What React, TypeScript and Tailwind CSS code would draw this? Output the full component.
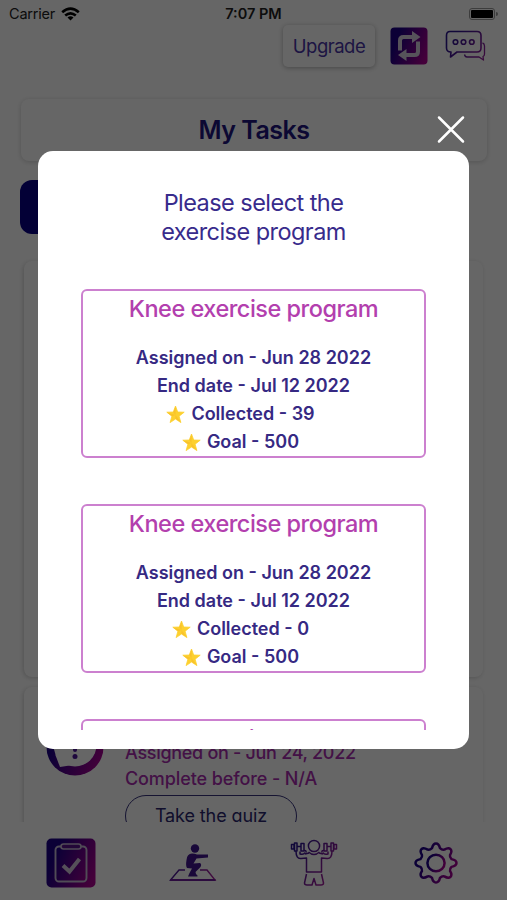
import type { ReactNode } from "react"

const programs = [
  { name: "Knee exercise program", assigned: "Jun 28 2022", end: "Jul 12 2022", collected: 39, goal: 500 },
  { name: "Knee exercise program", assigned: "Jun 28 2022", end: "Jul 12 2022", collected: 0, goal: 500 },
  { name: "Back exercise program", assigned: "Jun 28 2022", end: "Jul 12 2022", collected: 0, goal: 500 },
]

function Gradients() {
  return (
    <svg className="absolute h-0 w-0">
      <defs>
        <linearGradient id="brand" x1="0" y1="0.3" x2="1" y2="0.7">
          <stop offset="0.15" stopColor="#1c0088" />
          <stop offset="1" stopColor="#ac0092" />
        </linearGradient>
        <linearGradient id="line" gradientUnits="userSpaceOnUse" x1="0" y1="8" x2="46" y2="40">
          <stop offset="0.1" stopColor="#2c1590" />
          <stop offset="1" stopColor="#b4209c" />
        </linearGradient>
      </defs>
    </svg>
  )
}

function Star() {
  return (
    <svg className="h-[19px] w-[19px]" viewBox="0 0 19 19">
      <path
        d="M9.5 1 11.7 7 18.2 7.2 13.1 11.2 14.9 17.6 9.5 14 4.1 17.6 5.9 11.2.8 7.2 7.3 7Z"
        fill="#fdd02f"
        stroke="#fdd02f"
        strokeWidth="0.8"
        strokeLinejoin="round"
      />
      <path d="M9.5 1.5 9.5 10 7.3 7.2ZM1 7.4 9.5 10 6 11.2ZM9.5 10 14.7 17.3 9.5 13.8Z" fill="#f6b92a" opacity="0.6" />
    </svg>
  )
}

function SyncIcon() {
  return (
    <svg className="h-[38px] w-[38px]" viewBox="0 0 38 38">
      <rect x="0.5" y="0.5" width="37" height="37" rx="4" fill="url(#brand)" />
      <g fill="none" stroke="#d8d0e2" strokeWidth="4">
        <path d="M10 23.500V13.500Q10 10 13.500 10H23" />
        <path d="M28 14.500V24.500Q28 28 24.500 28H15" />
      </g>
      <path d="M22 4 30.500 10 22 16ZM16.500 22 8 28 16.500 34Z" fill="#d8d0e2" />
    </svg>
  )
}

function ChatIcon() {
  return (
    <svg className="h-[32px] w-[42px]" viewBox="0 0 42 32" fill="none" stroke="url(#line)" strokeWidth="1.6" strokeLinejoin="round">
      <path d="M5 1.500H32Q36 1.500 36 5.500V18Q36 22 32 22H12L5.500 27 6 22Q1.500 22 1.500 18V5.500Q1.500 1.500 5 1.500Z" />
      <path d="M37.500 13Q39.500 13.500 39.500 16V24Q39.500 26 38 26.500L38.500 30 34 27H22Q20 27 19.500 24.500" strokeWidth="1.3" />
      <circle cx="10.500" cy="12" r="2.300" />
      <circle cx="18.500" cy="12" r="2.300" />
      <circle cx="26.800" cy="12" r="2.300" />
    </svg>
  )
}

function TasksIcon() {
  return (
    <svg className="h-[50px] w-[50px]" viewBox="0 0 50 50">
      <rect x="0.5" y="0.5" width="49" height="49" rx="5" fill="url(#brand)" />
      <rect x="9.500" y="8.500" width="31" height="35" rx="3.500" fill="none" stroke="#c9bdd8" strokeWidth="1.900" />
      <rect x="15" y="6" width="20" height="5" rx="2.500" fill="#58128c" stroke="#c9bdd8" strokeWidth="1.600" />
      <path d="M17 27.500 23.500 33.500 33.500 21" fill="none" stroke="#d4c8de" strokeWidth="4" />
    </svg>
  )
}

function SquatIcon() {
  return (
    <svg className="h-[38px] w-[48px]" viewBox="0 0 48 38">
      <path d="M16 26H10L1.500 36H46L38 26H31" fill="none" stroke="url(#line)" strokeWidth="1.400" />
      <path d="M1 36H46.500" stroke="#6f1c9c" strokeWidth="1.900" />
      <circle cx="26" cy="4.500" r="4.200" fill="#3d1590" />
      <path
        d="M17.500 16Q18 9.500 23 9.500 26 9.500 28 10.500L39 10.500V13.500L27.500 14.500 24.500 19.500 31 19Q33 20.500 31.500 23L26.500 28 27 30 28.500 31.500V32.500H19L20.500 29 23 24.500 18 24Q16.500 22 17.500 16Z"
        fill="#42158e"
      />
    </svg>
  )
}

function LifterIcon() {
  return (
    <svg className="h-[48px] w-[48px]" viewBox="0 0 48 48" fill="none" stroke="url(#line)" strokeWidth="1.500" strokeLinejoin="round">
      <circle cx="24" cy="7" r="5.600" />
      <path d="M18.500 13Q24 18 29.500 13M16 13.500Q16.500 11 14 11.500M32 13.500Q31.500 11 34 11.500" />
      <path d="M6 12Q6 20 11 19.500L16.500 19V33H31.500V19L37 19.500Q42 20 42 12" />
      <path d="M10 12.500V15Q14 16 15 13.500M38 12.500V15Q34 16 33 13.500M15 15 19 14M33 15 29 14" />
      <path d="M1.500 5.500V10H4V5.500ZM4.500 4V12H7V4ZM7 7.500H11M11 4.500V12H14V4.500ZM34 4.500V12H37V4.500ZM37 7.500H41M41 4V12H43.500V4ZM44 5.500V10H46.500V5.500Z" />
      <path d="M16.500 35 14.500 44Q14.500 46 17 46H22L24 39.500 26 46H31Q33.500 46 33.500 44L31.500 35" />
    </svg>
  )
}

function GearIcon() {
  return (
    <svg className="h-[42px] w-[44px]" viewBox="-22 -22 44 44" preserveAspectRatio="none">
      <g fill="none" stroke="url(#brand)" strokeWidth="2.500" strokeLinejoin="round">
        <path d="M-4 -15.500Q-3 -20.500 0 -20.500T4 -15.500Q6 -13.500 8.300 -14Q12.500 -16.500 14.500 -14.500T14 -8.300Q13.500 -6 15.500 -4Q20.500 -3 20.500 0T15.500 4Q13.500 6 14 8.300Q16.500 12.500 14.500 14.500T8.300 14Q6 13.500 4 15.500Q3 20.500 0 20.500T-4 15.500Q-6 13.500 -8.300 14Q-12.500 16.500 -14.500 14.500T-14 8.300Q-13.500 6 -15.500 4Q-20.500 3 -20.500 0T-15.500 -4Q-13.500 -6 -14 -8.300Q-16.500 -12.500 -14.500 -14.500T-8.300 -14Q-6 -13.500 -4 -15.500Z" />
        <circle r="8.600" />
      </g>
    </svg>
  )
}

function QuizIcon() {
  return (
    <svg className="h-[58px] w-[58px]" viewBox="0 0 58 58">
      <circle cx="29" cy="29" r="28.500" fill="url(#brand)" />
      <circle cx="29" cy="27" r="21.500" fill="#fff" />
      <path d="M9 36 14 49 27 47Z" fill="#fff" />
      <path d="M29 18V32" stroke="#4b1599" strokeWidth="4" strokeLinecap="round" />
      <circle cx="29" cy="38.500" r="2.500" fill="#4b1599" />
    </svg>
  )
}

function StatusBar() {
  return (
    <div className="grid h-6 grid-cols-3 items-center px-[9px] pt-1 text-[14.500px] leading-5 text-[#222]">
      <div className="flex items-center gap-[6px]">
        <span className="tracking-[-0.2px]">Carrier</span>
        <svg className="h-[14px] w-[19px]" viewBox="0 0 19 14" fill="none" stroke="#000" strokeWidth="2.600">
          <path d="M1.200 5.200Q9.500-2 17.800 5.200M4.200 8.600Q9.500 4 14.800 8.600" />
          <path d="M9.500 13.500 6.500 10.500Q9.500 8 12.500 10.500Z" fill="#000" stroke="none" />
        </svg>
      </div>
      <span className="text-center font-semibold">7:07 PM</span>
      <div className="flex items-center justify-end gap-px">
        <div className="h-3 w-[26px] rounded-[3px] border border-[#999] p-px">
          <div className="h-full rounded-[1px] bg-black" />
        </div>
        <div className="h-1 w-[2px] rounded-r bg-[#999]" />
      </div>
    </div>
  )
}

function Row({ children }: { children: ReactNode }) {
  return <div className="flex h-7 items-center justify-center gap-[6px] pr-[26px]">{children}</div>
}

export default function App() {
  return (
    <div className="relative flex h-[900px] w-[507px] flex-col overflow-hidden bg-white font-['Inter','Liberation_Sans',sans-serif]">
      <Gradients />
      <StatusBar />

      <header className="flex h-11 items-center justify-end gap-[15px] pr-5">
        <button className="h-[42px] w-[92px] rounded-[5px] pt-[2px] text-[18.500px] tracking-[-0.5px] text-[#4a35a8] shadow-[0_1px_5px_rgba(0,0,0,0.3)]">
          Upgrade
        </button>
        <div className="flex items-center gap-[17px]">
          <SyncIcon />
          <ChatIcon />
        </div>
      </header>

      <div className="mr-5 ml-[21px] mt-[31px] flex h-[62px] shrink-0 items-center justify-center rounded-lg pt-[2px] shadow-[0_1px_5px_rgba(0,0,0,0.18)]">
        <h1 className="text-[25px] font-semibold tracking-[-0.5px] text-[#201480]">My Tasks</h1>
      </div>
      <div className="ml-5 mt-[19px] h-[54px] w-[233px] shrink-0 rounded-xl bg-[#080088]" />

      <main className="flex h-[588px] shrink-0 flex-col gap-[10px] overflow-hidden px-6 pt-[27px]">
        <div className="h-[416px] shrink-0 rounded-lg shadow-[-1px_1px_4px_rgba(0,0,0,0.18)]" />
        <div className="flex h-[200px] shrink-0 items-start rounded-t-lg pl-[22px] pt-[31px] shadow-[-1px_1px_4px_rgba(0,0,0,0.18)]">
          <QuizIcon />
          <div className="ml-[21px] pt-[22px] text-[18px] font-medium leading-[26px] text-[#a82cae]">
            <p className="tracking-[-0.3px]">Assigned on - Jun 24, 2022</p>
            <p className="tracking-[-0.1px]">Complete before - N/A</p>
            <button className="mt-[3px] h-[42px] w-[172px] rounded-full border-[1.500px] border-[#37337e] text-[18px] font-normal tracking-[-0.1px] text-[#2b276e]">
              Take the quiz
            </button>
          </div>
        </div>
      </main>

      <nav className="flex h-[78px] shrink-0 items-center bg-white pt-1 pl-[46px]">
        <div className="w-[123px]"><TasksIcon /></div>
        <div className="w-[121px]"><SquatIcon /></div>
        <div className="w-[124px]"><LifterIcon /></div>
        <GearIcon />
      </nav>

      {/* Program picker */}
      <div className="absolute inset-0 flex flex-col bg-black/60 pt-[114px]">
        <button className="mr-[41px] ml-auto h-[30px] w-[30px]">
          <svg viewBox="0 0 30 30" fill="none" stroke="#fff" strokeWidth="2.500" strokeLinecap="round">
            <path d="M3 3.500 27 27.500M27 3.500 3 27.500" />
          </svg>
        </button>
        <div className="mx-[38px] mt-[7px] flex h-[598px] flex-col rounded-[15px] bg-white px-[43px] pt-[37px] pb-[19px]">
          <h2 className="text-center text-[23.500px] leading-[29px] tracking-[-0.55px] text-[#382b8c]">
            Please select the
            <br />
            exercise program
          </h2>
          <div className="mt-[43px] flex min-h-0 flex-1 flex-col gap-[46px] overflow-hidden">
            {programs.map((program, index) => (
              <div
                key={index}
                className="h-[169px] shrink-0 rounded-md border-2 border-[#cc80cf] text-center text-[18px] font-semibold leading-7 text-[#362983]"
              >
                <h3 className="mb-[19px] h-[34px] text-[23.500px] font-medium leading-[35px] tracking-[-0.5px] text-[#b33fae]">
                  {program.name}
                </h3>
                <p>Assigned on - {program.assigned}</p>
                <p>End date - {program.end}</p>
                <Row>
                  <Star />
                  <span>Collected - {program.collected}</span>
                </Row>
                <Row>
                  <Star />
                  <span>Goal - {program.goal}</span>
                </Row>
              </div>
            ))}
          </div>
        </div>
      </div>
    </div>
  )
}
